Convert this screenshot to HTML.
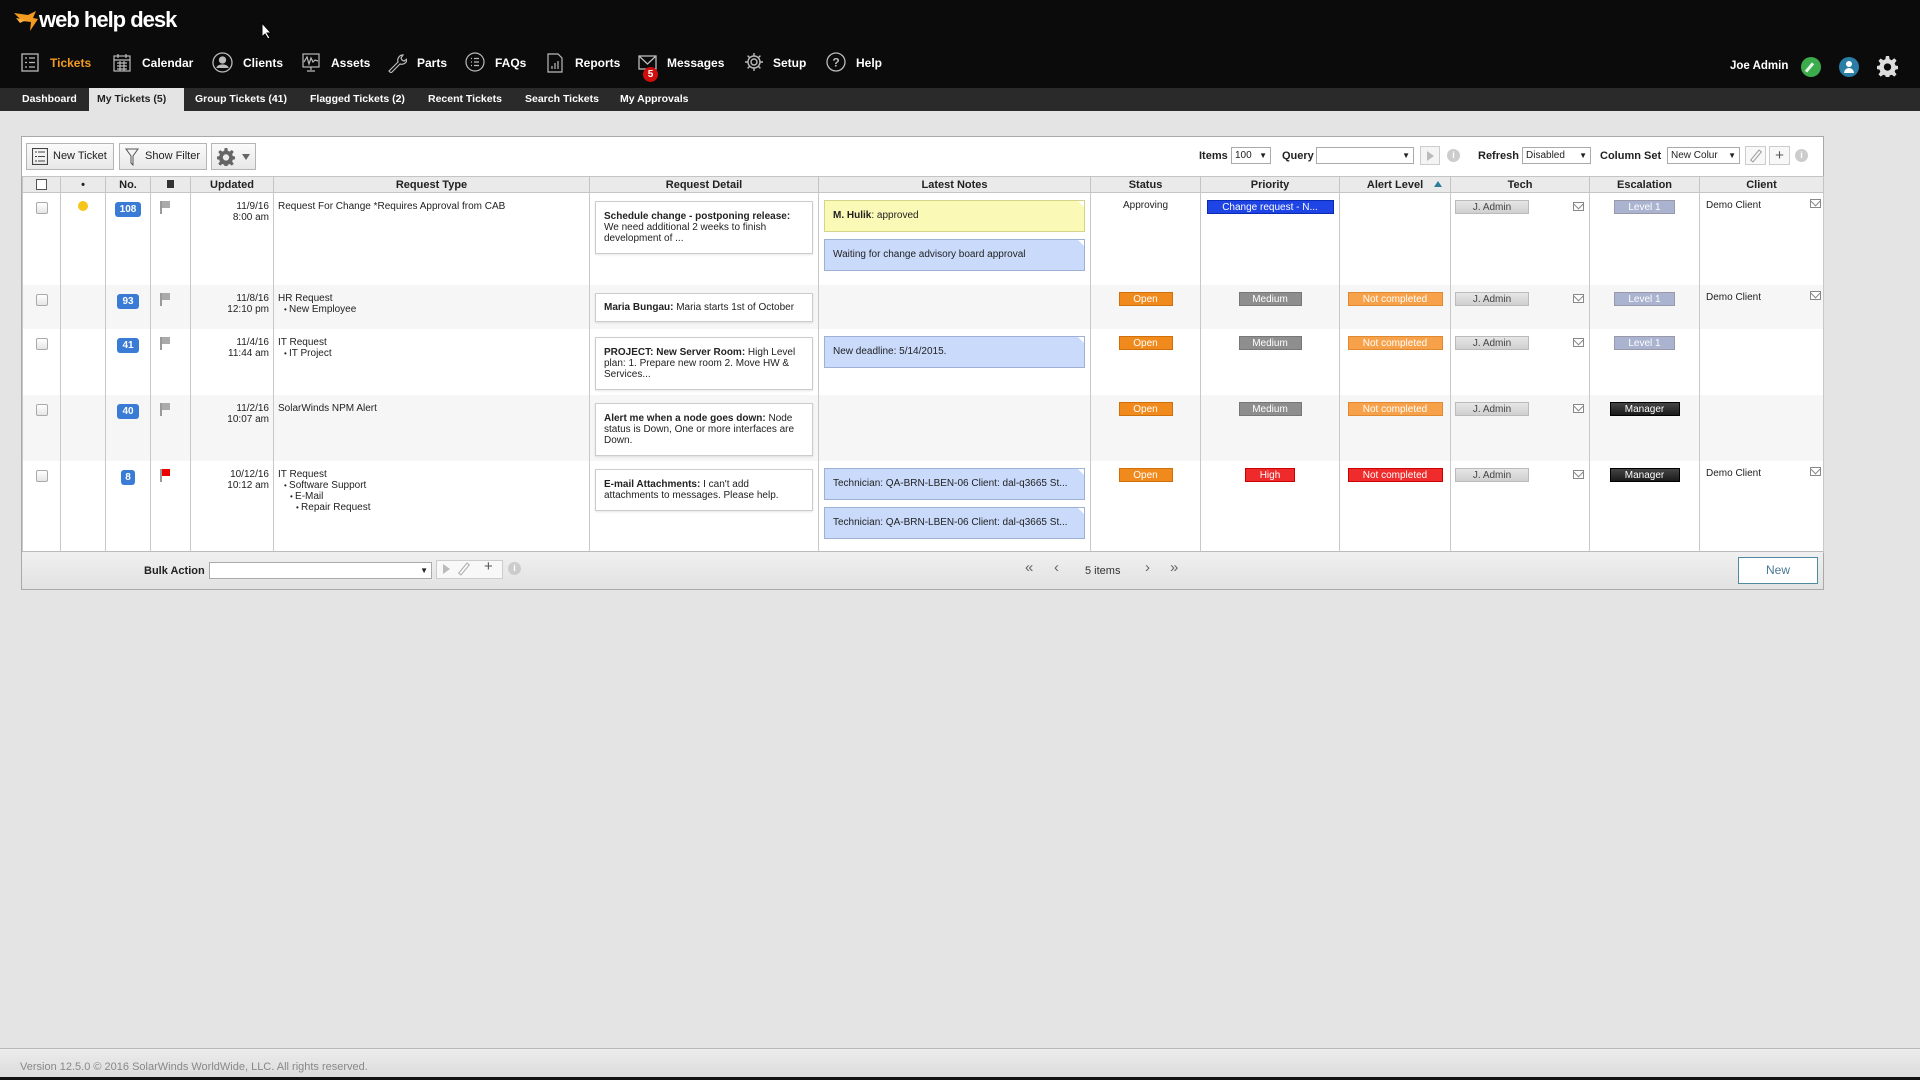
<!DOCTYPE html>
<html><head><meta charset="utf-8">
<style>
*{box-sizing:border-box;margin:0;padding:0}
body{width:1920px;height:1080px;background:#e4e4e4;font-family:"Liberation Sans",Arial,sans-serif;position:relative;overflow:hidden;color:#222}
.abs{position:absolute}
#top{left:0;top:0;width:1920px;height:88px;background:#0b0b0c}
#sub{left:0;top:88px;width:1920px;height:23px;background:#2a2a2a}
.nav{position:absolute;top:56px;color:#fff;font-size:12px;font-weight:bold;line-height:15px}
.ico{position:absolute;top:53px}
.tab{position:absolute;top:88px;height:23px;line-height:23px;color:#fff;font-size:10.5px;font-weight:bold;padding:0 8px}
#panel{left:21px;top:136px;width:1803px;height:454px;background:#fff;border:1px solid #a9a9a9}
.btn{position:absolute;top:6px;height:27px;border:1px solid #b5b5b5;background:linear-gradient(#fafafa,#e8e8e8);font-size:11px;line-height:25px;color:#222}
.lbl{position:absolute;top:13px;font-size:11px;font-weight:bold;color:#222}
.sel{position:absolute;top:10px;height:17px;border:1px solid #aaa;background:#fff;font-size:10px;line-height:15px;padding-left:3px;color:#222}
.sel:after{content:"▼";position:absolute;right:3px;top:0;font-size:8px}
table{position:absolute;left:0;top:39px;border-collapse:collapse;table-layout:fixed;width:1801px}
th{height:16px;background:#eaeaea;border:1px solid #c4c4c4;font-size:11px;font-weight:bold;color:#222;text-align:center;line-height:14px}
td{border-left:1px solid #c8c8c8;border-right:1px solid #c8c8c8;vertical-align:top;font-size:10px;color:#222;position:relative;line-height:11px}
tr.alt td{background:#f6f6f6}
.cb{width:12px;height:12px;border:1px solid #aaa;border-radius:2px;background:linear-gradient(#fff,#e5e5e5);margin:9px auto 0}
.num{display:inline-block;background:#3a7bd5;color:#fff;font-size:10px;font-weight:bold;border-radius:3px;height:15px;line-height:15px;padding:0 5px;margin-top:9px}
.flag{position:absolute;left:9px;top:8px;width:2px;height:13px;background:#999}
.flag:after{content:"";position:absolute;left:2px;top:0;width:8px;height:7px;background:#aaa}
.flag.red:after{background:#e00}
.upd{text-align:right;padding:8px 4px 0 0}
.rt{padding:8px 4px 0 4px;line-height:11px}
.rt ul{list-style:none;padding-left:6px}
.rt li:before{content:"• ";font-size:8px}
.det{margin:8px 5px 0 5px;border:1px solid #ccc;background:#fff;padding:9px 8px;font-size:10px;line-height:11px;box-shadow:0 1px 2px rgba(0,0,0,.1)}
.note{margin:7px 5px 0 5px;height:32px;border:1px solid #9db1d6;background:#c9dafb;padding:0 8px;line-height:30px;font-size:10px;position:relative;white-space:nowrap;overflow:hidden}
.note:after{content:"";position:absolute;right:-1px;top:-1px;border-left:8px solid transparent;border-top:8px solid #fff;}
.note.y{background:#fbf9b6;border-color:#d6d48a}
.bd{display:inline-block;height:14px;line-height:14px;font-size:10px;color:#fff;text-align:center;margin-top:7px}
.env{position:absolute;top:9px;width:11px;height:9px;border:1px solid #888;background:#fff}
.env:after{content:"";position:absolute;left:1px;top:-2px;width:6px;height:6px;border-right:1px solid #888;border-bottom:1px solid #888;transform:rotate(45deg)}
#foot{left:0;top:1048px;width:1920px;height:29px;background:linear-gradient(#ececec,#dcdcdc);border-top:1px solid #b8b8b8;font-size:11px;color:#888;padding:12px 0 0 20px}
</style></head><body>
<div id="top" class="abs"></div>
<svg class="abs" style="left:14px;top:11px" width="26" height="20" viewBox="0 0 26 20"><path d="M0 2 L14 4 L22 0 L19 7 L24 8 L16 20 L17 11 L8 10 Z" fill="#f39a1f"/><path d="M2 7 L12 9 L6 12 Z" fill="#f7b13e"/></svg>
<div class="abs" style="left:39px;top:7px;color:#fff;font-size:22px;font-weight:bold;letter-spacing:-1px">web help desk</div>
<svg class="abs" style="left:261px;top:22px" width="12" height="18" viewBox="0 0 12 18"><path d="M1 1 L1 15 L4 12 L7 17 L9 16 L6 11 L10 11 Z" fill="#fff" stroke="#000" stroke-width="1"/></svg>
<svg class="ico" style="left:21px" width="18" height="19" viewBox="0 0 18 19" fill="none" stroke="#bbb" stroke-width="1.3"><rect x="1" y="1" width="16" height="17"/><path d="M4 5h2M8 5h6M4 9.5h2M8 9.5h6M4 14h2M8 14h6"/></svg>
<div class="nav" style="left:50px;color:#f39a1f">Tickets</div>
<svg class="ico" style="left:113px" width="18" height="19" viewBox="0 0 18 19" fill="none" stroke="#bbb" stroke-width="1.2"><rect x="1" y="3" width="16" height="15"/><path d="M5 1v4M13 1v4M1 7h16M4 10h10M4 13h10M4 16h10M7 8v10M11 8v10"/></svg>
<div class="nav" style="left:142px">Calendar</div>
<svg class="ico" style="left:212px;top:52px" width="21" height="21" viewBox="0 0 21 21" fill="none" stroke="#bbb" stroke-width="1.3"><circle cx="10.5" cy="10.5" r="9.5"/><circle cx="10.5" cy="8" r="3" fill="#bbb"/><path d="M5 16c1-4 10-4 11 0" fill="#bbb"/></svg>
<div class="nav" style="left:243px">Clients</div>
<svg class="ico" style="left:302px" width="18" height="19" viewBox="0 0 18 19" fill="none" stroke="#bbb" stroke-width="1.2"><rect x="1" y="1" width="16" height="13"/><path d="M2 9l3-5 2 7 2-6 2 4 2-2 3 1M9 14v3M5 18h8"/></svg>
<div class="nav" style="left:331px">Assets</div>
<svg class="ico" style="left:387px" width="20" height="20" viewBox="0 0 20 20" fill="none" stroke="#bbb" stroke-width="1.2"><path d="M2 18l9-9c-1-3 1-7 5-7l-2 3 1 2 2 1 3-2c0 4-4 6-7 5l-9 9z"/></svg>
<div class="nav" style="left:417px">Parts</div>
<svg class="ico" style="left:465px;top:52px" width="20" height="20" viewBox="0 0 20 20" fill="none" stroke="#bbb" stroke-width="1.2"><circle cx="10" cy="10" r="9"/><path d="M6 6.5h1M9 6.5h5M6 10h1M9 10h5M6 13.5h1M9 13.5h5"/></svg>
<div class="nav" style="left:495px">FAQs</div>
<svg class="ico" style="left:547px" width="16" height="20" viewBox="0 0 16 20" fill="none" stroke="#bbb" stroke-width="1.2"><path d="M1 1h10l4 4v14H1z"/><path d="M5 16v-3M8 16v-6M11 16v-8"/></svg>
<div class="nav" style="left:575px">Reports</div>
<svg class="ico" style="left:638px;top:55px" width="19" height="15" viewBox="0 0 19 15" fill="none" stroke="#bbb" stroke-width="1.3"><rect x="1" y="1" width="17" height="13"/><path d="M1 1l8.5 8L18 1"/></svg>
<div class="abs" style="left:643px;top:67px;width:15px;height:15px;border-radius:50%;background:#d10e0e;color:#fff;font-size:10px;font-weight:bold;text-align:center;line-height:15px">5</div>
<div class="nav" style="left:667px">Messages</div>
<svg class="ico" style="left:744px;top:52px" width="20" height="20" viewBox="0 0 20 20" fill="none" stroke="#bbb" stroke-width="1.4"><circle cx="10" cy="10" r="3"/><circle cx="10" cy="10" r="6"/><path d="M10 1v3M10 16v3M1 10h3M16 10h3M3.6 3.6l2 2M14.4 14.4l2 2M3.6 16.4l2-2M14.4 5.6l2-2"/></svg>
<div class="nav" style="left:773px">Setup</div>
<svg class="ico" style="left:826px;top:52px" width="20" height="20" viewBox="0 0 20 20" fill="none" stroke="#bbb" stroke-width="1.3"><circle cx="10" cy="10" r="9"/><text x="10" y="14.5" text-anchor="middle" font-size="12" font-weight="bold" fill="#bbb" stroke="none" font-family="Liberation Sans">?</text></svg>
<div class="nav" style="left:856px">Help</div>
<div class="nav" style="left:1730px;top:59px;font-size:11.5px">Joe Admin</div>
<div class="abs" style="left:1801px;top:57px;width:20px;height:20px;border-radius:50%;background:#3cab4b"></div>
<div class="abs" style="left:1808px;top:62px;width:3px;height:11px;background:#e8f5e9;transform:rotate(40deg)"></div>
<div class="abs" style="left:1839px;top:57px;width:20px;height:20px;border-radius:50%;background:#2a7ea6"></div>
<div class="abs" style="left:1846px;top:61px;width:6px;height:6px;border-radius:50%;background:#fff"></div>
<div class="abs" style="left:1844px;top:68px;width:10px;height:5px;border-radius:5px 5px 0 0;background:#fff"></div>
<svg class="abs" style="left:1877px;top:56px" width="21" height="21" viewBox="0 0 20 20"><path d="M8.5 0h3l.5 3 2 1 2.5-1.8 2.1 2.1L16.8 7l.8 2 2.4.5v3l-2.4.5-.8 2 1.8 2.5-2.1 2.1-2.5-1.8-2 .8-.5 2.7h-3l-.5-2.7-2-.8-2.5 1.8-2.1-2.1L3.2 15l-.8-2L0 12.5v-3L2.4 9l.8-2-1.8-2.5 2.1-2.1L6 4l2-1z" fill="#ddd"/><circle cx="10" cy="10.5" r="3.5" fill="#0b0b0c"/></svg>
<div id="sub" class="abs"></div>
<div class="tab" style="left:14px">Dashboard</div>
<div class="tab" style="left:89px;width:95px;background:#e4e4e4;color:#222">My Tickets (5)</div>
<div class="tab" style="left:187px">Group Tickets (41)</div>
<div class="tab" style="left:302px">Flagged Tickets (2)</div>
<div class="tab" style="left:420px">Recent Tickets</div>
<div class="tab" style="left:517px">Search Tickets</div>
<div class="tab" style="left:612px">My Approvals</div>

<div id="panel" class="abs">
 <div class="btn" style="left:4px;width:88px;padding-left:26px">
  <svg class="abs" style="left:5px;top:4px" width="16" height="17" viewBox="0 0 16 17" fill="none" stroke="#444" stroke-width="1.1"><rect x=".5" y=".5" width="15" height="16"/><path d="M3 4h2M6 4h7M3 8.5h2M6 8.5h7M3 13h2M6 13h7"/></svg>New Ticket</div>
 <div class="btn" style="left:97px;width:88px;padding-left:25px">
  <svg class="abs" style="left:5px;top:4px" width="14" height="18" viewBox="0 0 14 18" fill="none" stroke="#555" stroke-width="1"><path d="M1 1h12L8 8v9L6 15V8z"/></svg>Show Filter</div>
 <div class="btn" style="left:189px;width:45px">
  <svg class="abs" style="left:5px;top:4px" width="18" height="18" viewBox="0 0 20 20"><path d="M8.5 0h3l.5 3 2 1 2.5-1.8 2.1 2.1L16.8 7l.8 2 2.4.5v3l-2.4.5-.8 2 1.8 2.5-2.1 2.1-2.5-1.8-2 .8-.5 2.7h-3l-.5-2.7-2-.8-2.5 1.8-2.1-2.1L3.2 15l-.8-2L0 12.5v-3L2.4 9l.8-2-1.8-2.5 2.1-2.1L6 4l2-1z" fill="#666"/><circle cx="10" cy="10.5" r="3.5" fill="#eee"/></svg>
  <div class="abs" style="left:30px;top:10px;border-left:4px solid transparent;border-right:4px solid transparent;border-top:6px solid #666"></div></div>
 <div class="lbl" style="left:1177px">Items</div>
 <div class="sel" style="left:1209px;width:40px">100</div>
 <div class="lbl" style="left:1260px">Query</div>
 <div class="sel" style="left:1294px;width:98px"></div>
 <div class="abs" style="left:1398px;top:9px;width:20px;height:19px;border:1px solid #ccc;background:#f4f4f4"><div class="abs" style="left:6px;top:4px;border-top:5px solid transparent;border-bottom:5px solid transparent;border-left:7px solid #bbb"></div></div>
 <div class="abs" style="left:1425px;top:12px;width:13px;height:13px;border-radius:50%;background:#ccc;color:#fff;font-size:9px;font-weight:bold;text-align:center;line-height:13px">i</div>
 <div class="lbl" style="left:1456px">Refresh</div>
 <div class="sel" style="left:1500px;width:69px">Disabled</div>
 <div class="lbl" style="left:1578px">Column Set</div>
 <div class="sel" style="left:1645px;width:73px">New Colur</div>
 <div class="abs" style="left:1723px;top:9px;width:21px;height:19px;border:1px solid #ccc;background:#f8f8f8"><div class="abs" style="left:8px;top:2px;width:4px;height:14px;border:1px solid #999;transform:rotate(40deg)"></div></div>
 <div class="abs" style="left:1747px;top:9px;width:21px;height:19px;border:1px solid #ccc;background:#f8f8f8;text-align:center;font-size:15px;line-height:17px;color:#555">+</div>
 <div class="abs" style="left:1773px;top:12px;width:13px;height:13px;border-radius:50%;background:#ccc;color:#fff;font-size:9px;font-weight:bold;text-align:center;line-height:13px">i</div>

 <table>
 <colgroup><col style="width:38px"><col style="width:45px"><col style="width:45px"><col style="width:40px"><col style="width:83px"><col style="width:316px"><col style="width:229px"><col style="width:272px"><col style="width:110px"><col style="width:139px"><col style="width:111px"><col style="width:139px"><col style="width:110px"><col style="width:124px"></colgroup>
 <tr><th><div style="width:11px;height:11px;border:1px solid #555;background:#fff;margin:0 auto"></div></th><th>•</th><th>No.</th><th><span style="display:inline-block;width:7px;height:8px;border-left:2px solid #333;background:#333"></span></th><th>Updated</th><th>Request Type</th><th>Request Detail</th><th>Latest Notes</th><th>Status</th><th>Priority</th><th style="position:relative">Alert Level<span style="position:absolute;right:8px;top:4px;border-left:4px solid transparent;border-right:4px solid transparent;border-bottom:6px solid #2d7d9a"></span></th><th>Tech</th><th>Escalation</th><th>Client</th></tr>

 <tr style="height:92px">
  <td><div class="cb"></div></td>
  <td style="text-align:center"><div style="width:10px;height:10px;border-radius:50%;background:#f5c518;margin:8px auto 0"></div></td>
  <td style="text-align:center"><span class="num">108</span></td>
  <td><div class="flag"></div></td>
  <td class="upd">11/9/16<br>8:00 am</td>
  <td class="rt">Request For Change *Requires Approval from CAB</td>
  <td><div class="det"><b>Schedule change - postponing release:</b> We need additional 2 weeks to finish development of ...</div></td>
  <td><div class="note y"><b>M. Hulik</b>: approved</div><div class="note">Waiting for change advisory board approval</div></td>
  <td style="text-align:center;padding-top:7px">Approving</td>
  <td style="text-align:center"><span class="bd" style="width:127px;background:#1f44e6;border:1px solid #0a2bb0">Change request - N...</span></td>
  <td></td>
  <td><span class="bd" style="margin-left:4px;width:74px;background:linear-gradient(#e6e6e6,#cfcfcf);color:#444;border:1px solid #bbb">J. Admin</span><div class="env" style="left:122px"></div></td>
  <td style="text-align:center"><span class="bd" style="width:61px;background:#aab3cf;border:1px solid #99a">Level 1</span></td>
  <td style="padding:7px 0 0 6px">Demo Client<div class="env" style="left:110px;top:6px"></div></td>
 </tr>
 <tr class="alt" style="height:44px">
  <td><div class="cb"></div></td><td></td>
  <td style="text-align:center"><span class="num">93</span></td>
  <td><div class="flag"></div></td>
  <td class="upd">11/8/16<br>12:10 pm</td>
  <td class="rt">HR Request<ul><li>New Employee</li></ul></td>
  <td><div class="det" style="padding:8px"><b>Maria Bungau:</b> Maria starts 1st of October</div></td>
  <td></td>
  <td style="text-align:center"><span class="bd" style="width:54px;background:#f18a1d;border:1px solid #d0700a">Open</span></td>
  <td style="text-align:center"><span class="bd" style="width:63px;background:#8e8e8e;border:1px solid #777">Medium</span></td>
  <td style="text-align:center"><span class="bd" style="width:95px;background:#f7a24a;border:1px solid #e08a30">Not completed</span></td>
  <td><span class="bd" style="margin-left:4px;width:74px;background:linear-gradient(#e6e6e6,#cfcfcf);color:#444;border:1px solid #bbb">J. Admin</span><div class="env" style="left:122px"></div></td>
  <td style="text-align:center"><span class="bd" style="width:61px;background:#aab3cf;border:1px solid #99a">Level 1</span></td>
  <td style="padding:7px 0 0 6px">Demo Client<div class="env" style="left:110px;top:6px"></div></td>
 </tr>
 <tr style="height:66px">
  <td><div class="cb"></div></td><td></td>
  <td style="text-align:center"><span class="num">41</span></td>
  <td><div class="flag"></div></td>
  <td class="upd">11/4/16<br>11:44 am</td>
  <td class="rt">IT Request<ul><li>IT Project</li></ul></td>
  <td><div class="det"><b>PROJECT: New Server Room:</b> High Level plan: 1. Prepare new room 2. Move HW &amp; Services...</div></td>
  <td><div class="note">New deadline: 5/14/2015.</div></td>
  <td style="text-align:center"><span class="bd" style="width:54px;background:#f18a1d;border:1px solid #d0700a">Open</span></td>
  <td style="text-align:center"><span class="bd" style="width:63px;background:#8e8e8e;border:1px solid #777">Medium</span></td>
  <td style="text-align:center"><span class="bd" style="width:95px;background:#f7a24a;border:1px solid #e08a30">Not completed</span></td>
  <td><span class="bd" style="margin-left:4px;width:74px;background:linear-gradient(#e6e6e6,#cfcfcf);color:#444;border:1px solid #bbb">J. Admin</span><div class="env" style="left:122px"></div></td>
  <td style="text-align:center"><span class="bd" style="width:61px;background:#aab3cf;border:1px solid #99a">Level 1</span></td>
  <td></td>
 </tr>
 <tr class="alt" style="height:66px">
  <td><div class="cb"></div></td><td></td>
  <td style="text-align:center"><span class="num">40</span></td>
  <td><div class="flag"></div></td>
  <td class="upd">11/2/16<br>10:07 am</td>
  <td class="rt">SolarWinds NPM Alert</td>
  <td><div class="det"><b>Alert me when a node goes down:</b> Node status is Down, One or more interfaces are Down.</div></td>
  <td></td>
  <td style="text-align:center"><span class="bd" style="width:54px;background:#f18a1d;border:1px solid #d0700a">Open</span></td>
  <td style="text-align:center"><span class="bd" style="width:63px;background:#8e8e8e;border:1px solid #777">Medium</span></td>
  <td style="text-align:center"><span class="bd" style="width:95px;background:#f7a24a;border:1px solid #e08a30">Not completed</span></td>
  <td><span class="bd" style="margin-left:4px;width:74px;background:linear-gradient(#e6e6e6,#cfcfcf);color:#444;border:1px solid #bbb">J. Admin</span><div class="env" style="left:122px"></div></td>
  <td style="text-align:center"><span class="bd" style="width:70px;background:linear-gradient(#444,#1a1a1a);border:1px solid #000">Manager</span></td>
  <td></td>
 </tr>
 <tr style="height:92px">
  <td><div class="cb"></div></td><td></td>
  <td style="text-align:center"><span class="num" style="padding:0 4px">8</span></td>
  <td><div class="flag red"></div></td>
  <td class="upd">10/12/16<br>10:12 am</td>
  <td class="rt">IT Request<ul><li>Software Support<ul><li>E-Mail<ul><li>Repair Request</li></ul></li></ul></li></ul></td>
  <td><div class="det"><b>E-mail Attachments:</b> I can't add attachments to messages. Please help.</div></td>
  <td><div class="note">Technician: QA-BRN-LBEN-06 Client: dal-q3665 St...</div><div class="note">Technician: QA-BRN-LBEN-06 Client: dal-q3665 St...</div></td>
  <td style="text-align:center"><span class="bd" style="width:54px;background:#f18a1d;border:1px solid #d0700a">Open</span></td>
  <td style="text-align:center"><span class="bd" style="width:50px;background:#ee2a2a;border:1px solid #c00">High</span></td>
  <td style="text-align:center"><span class="bd" style="width:95px;background:#f02b2b;border:1px solid #c00">Not completed</span></td>
  <td><span class="bd" style="margin-left:4px;width:74px;background:linear-gradient(#e6e6e6,#cfcfcf);color:#444;border:1px solid #bbb">J. Admin</span><div class="env" style="left:122px"></div></td>
  <td style="text-align:center"><span class="bd" style="width:70px;background:linear-gradient(#444,#1a1a1a);border:1px solid #000">Manager</span></td>
  <td style="padding:7px 0 0 6px">Demo Client<div class="env" style="left:110px;top:6px"></div></td>
 </tr>
 </table>
 <div class="abs" style="left:0;top:414px;width:1801px;height:38px;background:linear-gradient(#f0f0f0,#e2e2e2);border-top:1px solid #bbb"></div>
 <div class="lbl" style="left:122px;top:428px">Bulk Action</div>
 <div class="sel" style="left:187px;top:425px;width:223px;height:17px"></div>
 <div class="abs" style="left:414px;top:423px;width:67px;height:19px;border:1px solid #ccc;background:#f8f8f8"></div>
 <div class="abs" style="left:421px;top:427px;border-top:5px solid transparent;border-bottom:5px solid transparent;border-left:7px solid #bbb"></div>
 <div class="abs" style="left:440px;top:425px;width:4px;height:14px;border:1px solid #aaa;transform:rotate(40deg)"></div>
 <div class="abs" style="left:462px;top:421px;font-size:15px;color:#555">+</div>
 <div class="abs" style="left:486px;top:425px;width:13px;height:13px;border-radius:50%;background:#ccc;color:#fff;font-size:9px;font-weight:bold;text-align:center;line-height:13px">i</div>
 <div class="abs" style="left:1003px;top:422px;font-size:15px;color:#666">«</div>
 <div class="abs" style="left:1032px;top:422px;font-size:15px;color:#666">‹</div>
 <div class="abs" style="left:1063px;top:428px;font-size:11px;color:#333">5 items</div>
 <div class="abs" style="left:1123px;top:422px;font-size:15px;color:#666">›</div>
 <div class="abs" style="left:1148px;top:422px;font-size:15px;color:#666">»</div>
 <div class="abs" style="left:1716px;top:420px;width:80px;height:27px;border:1px solid #4f8aa3;background:#fff;text-align:center;line-height:25px;font-size:12px;color:#4a7a92">New</div>
</div>

<div id="foot" class="abs">Version 12.5.0 © 2016 SolarWinds WorldWide, LLC. All rights reserved.</div>
<div class="abs" style="left:0;top:1077px;width:1920px;height:3px;background:#111"></div>
</body></html>
